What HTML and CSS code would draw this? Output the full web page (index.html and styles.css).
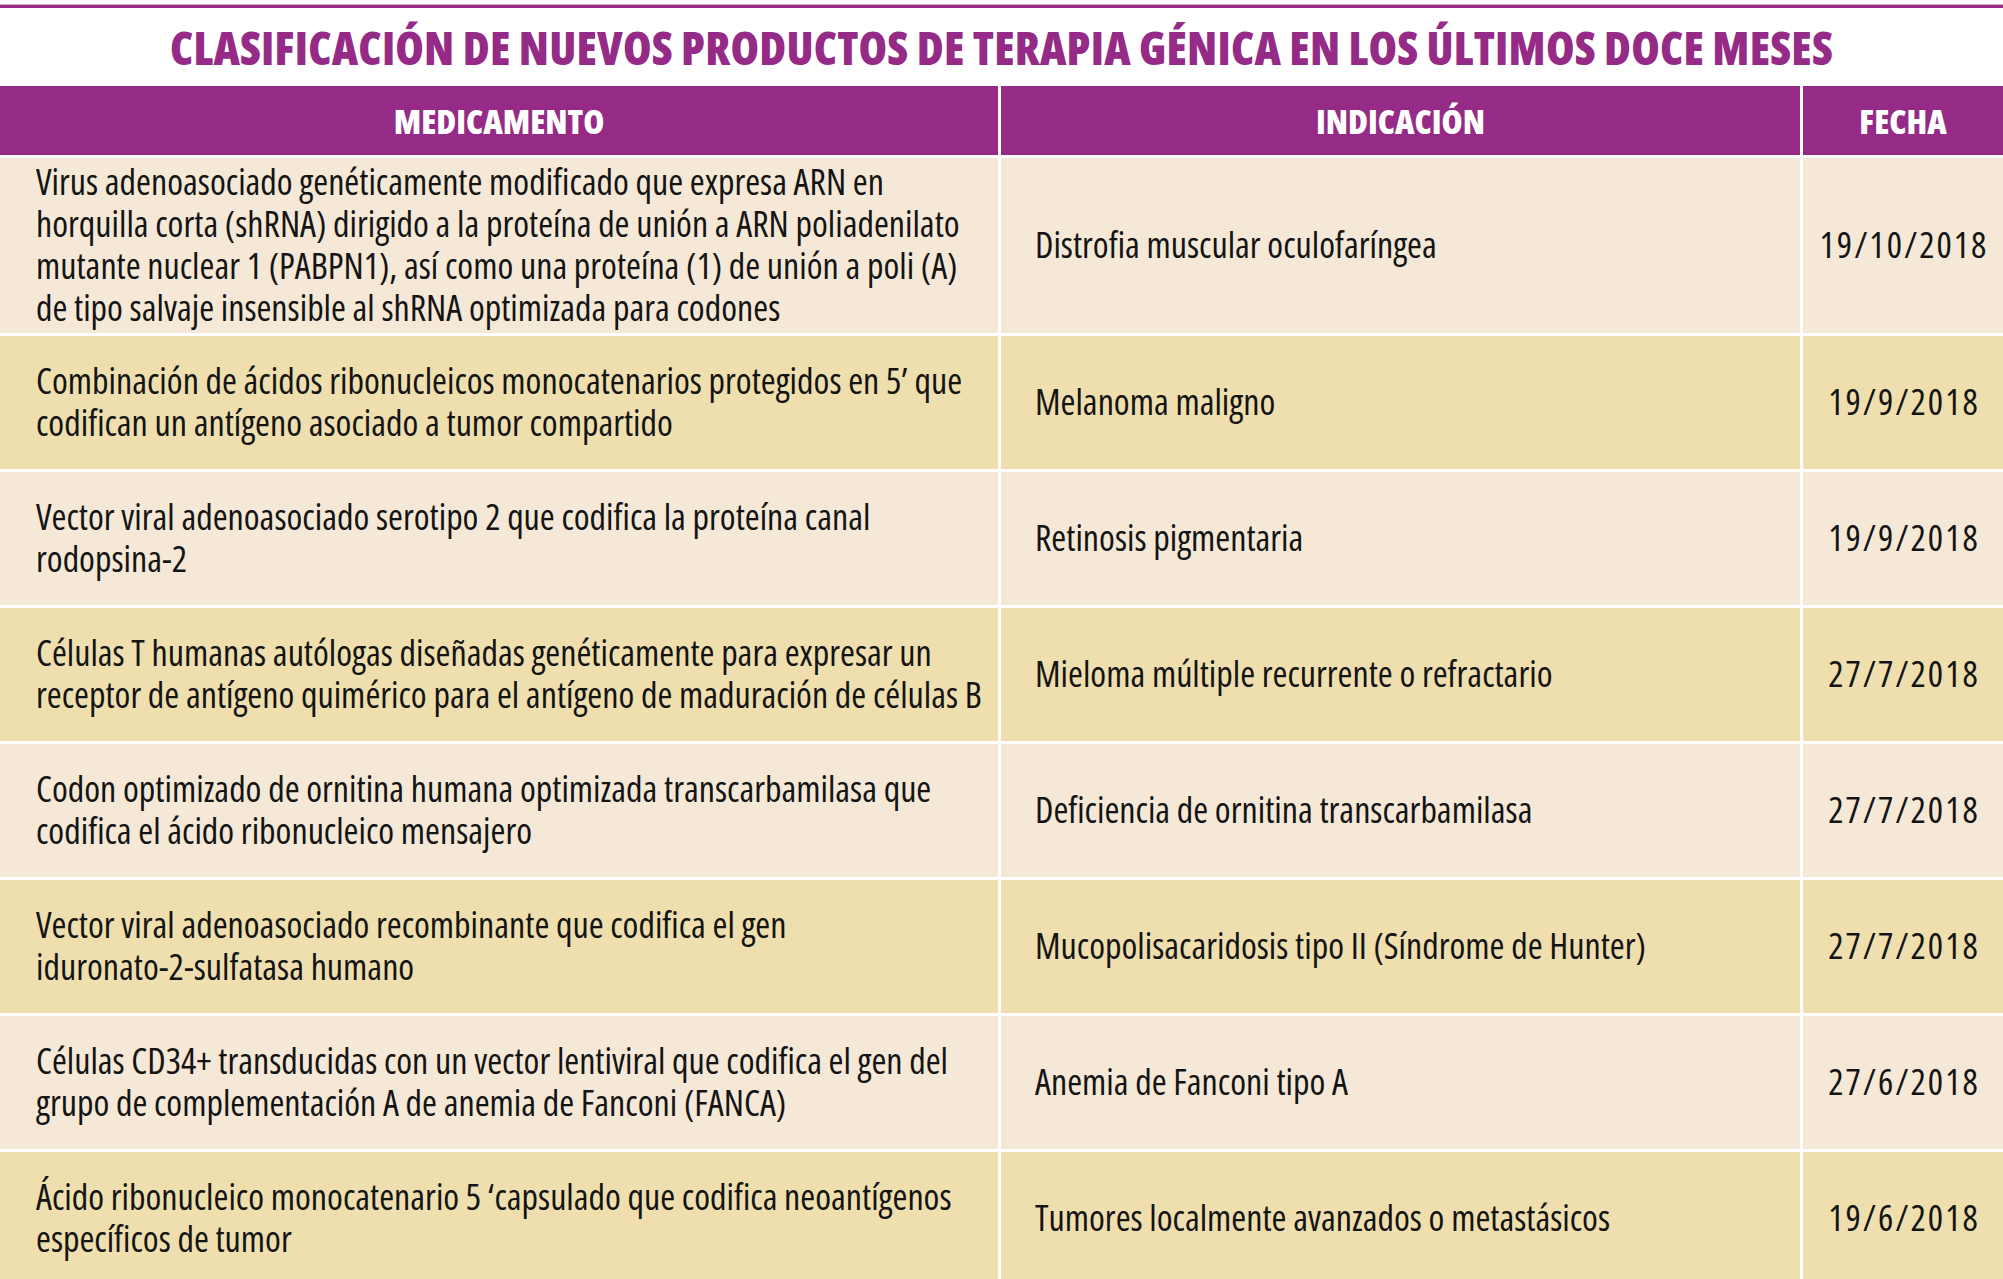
FILE: index.html
```html
<!DOCTYPE html>
<html lang="es">
<head>
<meta charset="utf-8">
<title>Clasificación de nuevos productos de terapia génica</title>
<link rel="stylesheet" href="styles.css">
</head>
<body>
<div class="sheet">
  <div class="rule"></div>
  <h1 class="title">CLASIFICACIÓN DE NUEVOS PRODUCTOS DE TERAPIA GÉNICA EN LOS ÚLTIMOS DOCE MESES</h1>
  <div class="table">
    <div class="cell head">MEDICAMENTO</div>
    <div class="cell head">INDICACIÓN</div>
    <div class="cell head">FECHA</div>

    <div class="cell light med">Virus adenoasociado genéticamente modificado que expresa ARN en<br>horquilla corta (shRNA) dirigido a la proteína de unión a ARN poliadenilato<br>mutante nuclear 1 (PABPN1), así como una proteína (1) de unión a poli (A)<br>de tipo salvaje insensible al shRNA optimizada para codones</div>
    <div class="cell light ind">Distrofia muscular oculofaríngea</div>
    <div class="cell light date">19/10/2018</div>

    <div class="cell dark med">Combinación de ácidos ribonucleicos monocatenarios protegidos en 5’ que<br>codifican un antígeno asociado a tumor compartido</div>
    <div class="cell dark ind">Melanoma maligno</div>
    <div class="cell dark date">19/9/2018</div>

    <div class="cell light med">Vector viral adenoasociado serotipo 2 que codifica la proteína canal<br>rodopsina-2</div>
    <div class="cell light ind">Retinosis pigmentaria</div>
    <div class="cell light date">19/9/2018</div>

    <div class="cell dark med">Células T humanas autólogas diseñadas genéticamente para expresar un<br>receptor de antígeno quimérico para el antígeno de maduración de células B</div>
    <div class="cell dark ind">Mieloma múltiple recurrente o refractario</div>
    <div class="cell dark date">27/7/2018</div>

    <div class="cell light med">Codon optimizado de ornitina humana optimizada transcarbamilasa que<br>codifica el ácido ribonucleico mensajero</div>
    <div class="cell light ind">Deficiencia de ornitina transcarbamilasa</div>
    <div class="cell light date">27/7/2018</div>

    <div class="cell dark med">Vector viral adenoasociado recombinante que codifica el gen<br>iduronato-2-sulfatasa humano</div>
    <div class="cell dark ind">Mucopolisacaridosis tipo II (Síndrome de Hunter)</div>
    <div class="cell dark date">27/7/2018</div>

    <div class="cell light med">Células CD34+ transducidas con un vector lentiviral que codifica el gen del<br>grupo de complementación A de anemia de Fanconi (FANCA)</div>
    <div class="cell light ind">Anemia de Fanconi tipo A</div>
    <div class="cell light date">27/6/2018</div>

    <div class="cell dark med">Ácido ribonucleico monocatenario 5 ‘capsulado que codifica neoantígenos<br>específicos de tumor</div>
    <div class="cell dark ind">Tumores localmente avanzados o metastásicos</div>
    <div class="cell dark date">19/6/2018</div>
  </div>
</div>
</body>
</html>
```

FILE: styles.css
```css
html, body {
  margin: 0;
  padding: 0;
  background: #ffffff;
}

body {
  font-family: "Open Sans", "Liberation Sans", Arial, sans-serif;
  font-stretch: 75%;
  color: #141414;
  overflow: hidden;
}

.sheet {
  width: 2003px;
}

.rule {
  margin-top: 4px;
  height: 3px;
  background: #952a87;
  border-top: 1px solid #d3afcf;
}

.title {
  margin: 0;
  height: 78px;
  display: flex;
  align-items: center;
  justify-content: center;
  font-size: 46px;
  font-weight: 800;
  color: #952a87;
  letter-spacing: 0.2px;
  white-space: nowrap;
}

.table {
  display: grid;
  grid-template-columns: 998px 799px 200px;
  column-gap: 3px;
  row-gap: 3px;
}

.cell {
  box-sizing: border-box;
  display: flex;
  align-items: center;
  font-size: 36px;
  line-height: 42px;
}

.head {
  height: 69px;
  justify-content: center;
  background: #952a87;
  color: #ffffff;
  font-weight: 800;
  font-size: 34px;
}

.light {
  background: #f5e8d6;
}

.dark {
  background: #efdfae;
}

.med,
.ind,
.date {
  min-height: 133px;
  padding-top: 3px;
  padding-bottom: 4px;
}

.med {
  padding-left: 36px;
  padding-right: 8px;
}

.ind {
  padding-left: 34px;
  padding-right: 8px;
}

.date {
  justify-content: center;
  letter-spacing: 2px;
  padding-left: 2px;
}
```
